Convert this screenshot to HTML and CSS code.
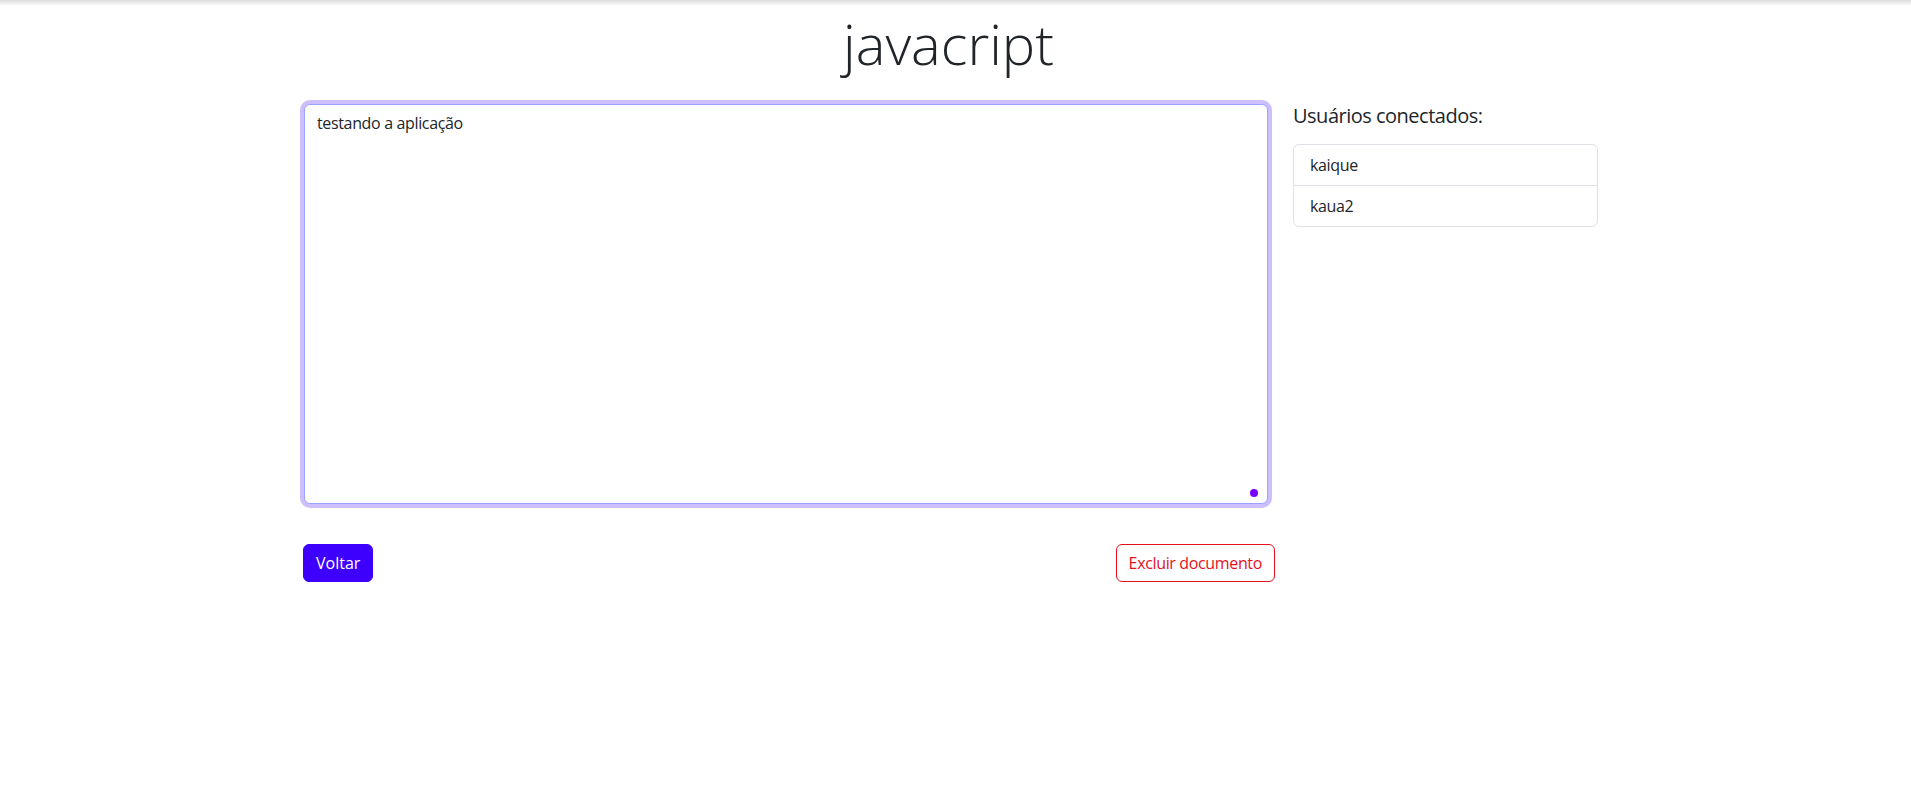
FILE: index.html
```html
<!DOCTYPE html>
<html lang="pt-BR">
<head>
<meta charset="utf-8">
<title>javacript</title>
<link rel="stylesheet" href="styles.css">
</head>
<body>
<div class="top-shade"></div>
<main class="page">
  <h1 class="title">javacript</h1>
  <div class="layout">
    <section class="editor">
      <div class="editor-box">
        <textarea class="doc">testando a aplicação</textarea>
        <span class="resize-dot"></span>
      </div>
      <div class="actions">
        <button class="btn btn-primary">Voltar</button>
        <button class="btn btn-outline-danger">Excluir documento</button>
      </div>
    </section>
    <aside class="users">
      <h5 class="users-title">Usuários conectados:</h5>
      <ul class="list-group">
        <li class="list-item">kaique</li>
        <li class="list-item">kaua2</li>
      </ul>
    </aside>
  </div>
</main>
</body>
</html>
```

FILE: styles.css
```css
* { box-sizing: border-box; }
html, body { margin: 0; padding: 0; background: #fff; }
body {
  font-family: "Open Sans", "Noto Sans", sans-serif;
  font-size: 16px;
  line-height: 1.5;
  letter-spacing: -0.35px;
  color: #212529;
}
.top-shade {
  position: fixed;
  top: 0; left: 0; right: 0;
  height: 6px;
  background: linear-gradient(to bottom, #dcdcdc, rgba(255,255,255,0));
  pointer-events: none;
}
.page {
  width: 1296px;
  margin-left: 303px;
  padding-top: 10px;
}
.title {
  margin: 0 0 27px 0;
  padding-right: 5px;
  text-align: center;
  font-size: 56px;
  font-weight: 300;
  line-height: 1.2;
  letter-spacing: 0;
  color: #212529;
}
.layout {
  display: flex;
  gap: 18px;
  align-items: flex-start;
}
.editor {
  width: 972px;
}
.editor-box {
  position: relative;
  margin-left: 1px;
  width: 964px;
  height: 400px;
}
.doc {
  display: block;
  width: 100%;
  height: 100%;
  resize: none;
  padding: 6px 12px;
  font-family: inherit;
  font-size: 16px;
  line-height: 1.5;
  letter-spacing: -0.35px;
  color: #212529;
  background: #fff;
  border: 1px solid #9aa4ff;
  border-radius: 6px;
  box-shadow: 0 0 0 4px #cdbffd;
  outline: none;
}
.resize-dot {
  position: absolute;
  right: 10px;
  bottom: 7px;
  width: 8px;
  height: 8px;
  border-radius: 50%;
  background: #7a00ff;
}
.actions {
  display: flex;
  justify-content: space-between;
  margin-top: 40px;
}
.btn {
  font-family: inherit;
  font-size: 16px;
  line-height: 1.5;
  letter-spacing: -0.35px;
  padding: 6px 12px;
  border-radius: 6px;
  border: 1px solid transparent;
  cursor: pointer;
}
.btn-primary {
  background: #3d00ff;
  border-color: #3d00ff;
  color: #fff;
  letter-spacing: 0;
}
.btn-outline-danger {
  background: #fff;
  border-color: #e5101f;
  color: #e5101f;
}
.users {
  width: 305px;
}
.users-title {
  margin: 0 0 16px 0;
  font-size: 20px;
  font-weight: 400;
  line-height: 1.2;
  letter-spacing: -0.5px;
  color: #212529;
}
.list-group {
  list-style: none;
  margin: 0;
  padding: 0;
  border: 1px solid #dee2e6;
  border-radius: 6px;
}
.list-item {
  padding: 8px 16px;
  font-size: 16px;
  line-height: 24px;
}
.list-item + .list-item {
  border-top: 1px solid #dee2e6;
}
```
